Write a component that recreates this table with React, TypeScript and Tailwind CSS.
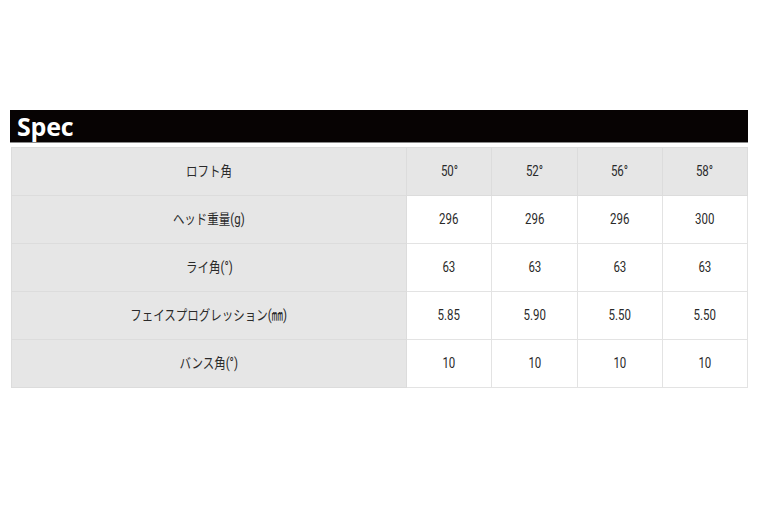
import React from 'react';

const cols = ['50°', '52°', '56°', '58°'];

const rows: { label: string; values: string[] }[] = [
  { label: 'ヘッド重量(g)', values: ['296', '296', '296', '300'] },
  { label: 'ライ角(°)', values: ['63', '63', '63', '63'] },
  { label: 'フェイスプログレッション(㎜)', values: ['5.85', '5.90', '5.50', '5.50'] },
  { label: 'バンス角(°)', values: ['10', '10', '10', '10'] },
];

const Txt = ({ children }: { children: React.ReactNode }) => (
  <span className="inline-block scale-x-[0.82] whitespace-nowrap">{children}</span>
);

const App = () => {
  return (
    <div
      className="w-[760px] h-[506px] bg-white pt-[110px] pl-[10px]"
      style={{ fontFamily: '"Roboto", "Noto Sans CJK JP", sans-serif' }}
    >
      <div className="w-[738px]">
        <div className="h-[33px] bg-[#070303] border-b border-[#8a8a8a] pl-[7px]">
          <h2
            className="text-white text-[25px] font-bold leading-[31px] pt-[1px] tracking-[-0.2px]"
            style={{ fontFamily: '"Open Sans", "Noto Sans", sans-serif' }}
          >
            Spec
          </h2>
        </div>
        <table className="mt-[4px] ml-[1px] w-[737px] border-collapse text-[14px] text-[#2a2a2a]">
          <tbody>
            <tr className="h-[48px] bg-[#e6e6e6]">
              <td className="w-[395px] text-center border border-[#dcdcdc]">
                <Txt>ロフト角</Txt>
              </td>
              {cols.map((c) => (
                <td key={c} className="text-center border border-[#dcdcdc]">
                  <Txt>{c}</Txt>
                </td>
              ))}
            </tr>
            {rows.map((r) => (
              <tr key={r.label} className="h-[48px]">
                <td className="w-[395px] text-center bg-[#e6e6e6] border border-[#dcdcdc]">
                  <Txt>{r.label}</Txt>
                </td>
                {r.values.map((v, i) => (
                  <td key={i} className="text-center bg-white border border-[#e3e3e3]">
                    <Txt>{v}</Txt>
                  </td>
                ))}
              </tr>
            ))}
          </tbody>
        </table>
      </div>
    </div>
  );
};

export default App;
